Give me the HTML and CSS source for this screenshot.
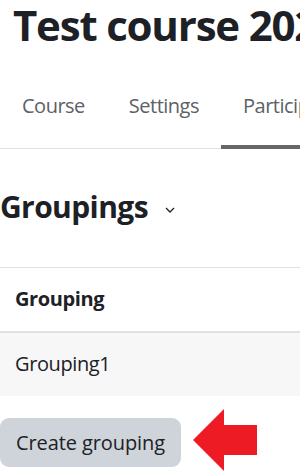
FILE: index.html
```html
<!DOCTYPE html>
<html lang="en">
<head>
<meta charset="UTF-8">
<title>Test course 2023: Groupings</title>
<link rel="stylesheet" href="styles.css">
</head>
<body>

<header class="page-header">
    <h1>Test course 2023</h1>
</header>

<nav class="tabs">
    <a class="tab" href="#">Course</a>
    <a class="tab" href="#">Settings</a>
    <a class="tab active" href="#">Participants</a>
    <a class="tab" href="#">Grades</a>
</nav>

<div class="heading">
    <h2>Groupings</h2>
    <svg class="chevron" width="10" height="6" viewBox="0 0 10 6">
        <path d="M1 1l4 4 4-4" fill="none" stroke="#1d2125" stroke-width="1.3"/>
    </svg>
</div>

<table class="groupings">
    <thead>
        <tr><th>Grouping</th></tr>
    </thead>
    <tbody>
        <tr><td>Grouping1</td></tr>
    </tbody>
</table>

<div class="actions">
    <button class="create-btn">Create grouping</button>
    <svg class="arrow" width="64" height="62" viewBox="0 0 64 62">
        <polygon points="0,31 31,0 31,16 64,16 64,46 31,46 31,62" fill="#ed1c24"/>
    </svg>
</div>

</body>
</html>
```

FILE: styles.css
```css
body {
    margin: 0;
    overflow: hidden;
    font-family: "Open Sans", "Noto Sans", sans-serif;
    color: #1d2125;
    background: #fff;
}

.page-header {
    padding-left: 13px;
    white-space: nowrap;
}

h1 {
    margin: 0;
    font-size: 42px;
    font-weight: 700;
    line-height: 1.2;
    letter-spacing: -1.2px;
}

.tabs {
    display: flex;
    white-space: nowrap;
    box-shadow: inset 0 -1px 0 #dee2e6;
}

.tab {
    padding: 41px 22px 24px;
    font-size: 20px;
    line-height: 1.5;
    letter-spacing: -0.5px;
    color: #5c6166;
    text-decoration: none;
    border-bottom: 4px solid transparent;
}

.tab.active {
    border-bottom-color: #666;
}

.heading {
    display: flex;
    align-items: center;
    gap: 17px;
    margin: 40px 0 42px;
}

h2 {
    margin: 0;
    font-size: 30px;
    font-weight: 700;
    line-height: 1.2;
    letter-spacing: -0.6px;
}

.chevron {
    margin-top: 6px;
}

.groupings {
    width: 100%;
    border-collapse: collapse;
    font-size: 20px;
    line-height: 1.5;
    letter-spacing: -0.4px;
}

.groupings th {
    text-align: left;
    padding: 16px 15px 17px;
    border-top: 1px solid #dee2e6;
    border-bottom: 2px solid #dee2e6;
}

.groupings td {
    padding: 16px 15px 17px;
    background: #f7f7f7;
}

.actions {
    display: flex;
    align-items: flex-start;
    gap: 12px;
    margin-top: 22px;
}

.create-btn {
    font-family: inherit;
    font-size: 20px;
    line-height: 1.5;
    letter-spacing: -0.1px;
    color: #1d2125;
    padding: 9.5px 16px;
    border: none;
    border-radius: 9px;
    background: #ced4da;
}

.arrow {
    margin-top: -9px;
}
```
